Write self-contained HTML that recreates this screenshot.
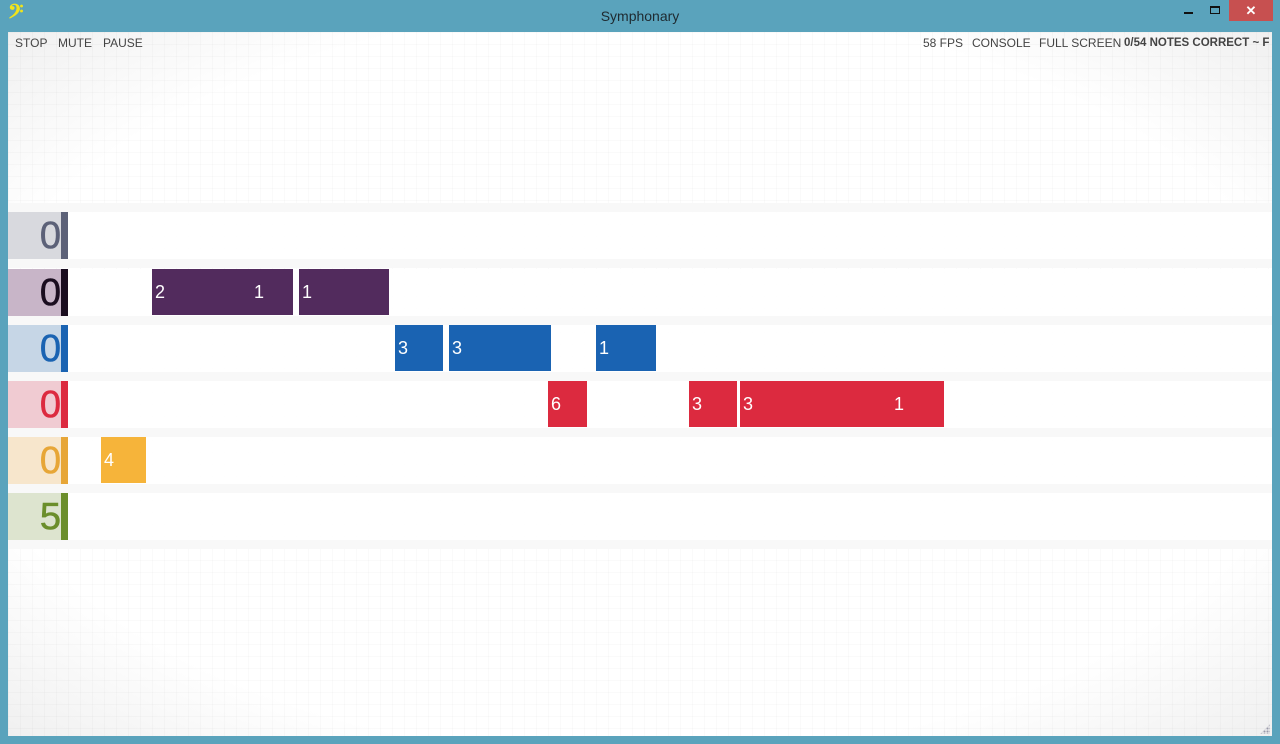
<!DOCTYPE html>
<html><head><meta charset="utf-8"><style>
*{margin:0;padding:0;box-sizing:border-box}
body{width:1280px;height:744px;background:#5aa3bc;position:relative;overflow:hidden;font-family:"Liberation Sans",sans-serif}
.title{position:absolute;top:0;left:0;width:1280px;height:32px;text-align:center;line-height:32px;font-size:14px;color:#1e2a30}
.close{position:absolute;left:1229px;top:0;width:44px;height:21px;background:#c75050;color:#fff;text-align:center;font-size:13px;line-height:21px;font-weight:bold}
.min{position:absolute;left:1184px;top:12px;width:9px;height:2px;background:#111}
.max{position:absolute;left:1210px;top:6px;width:10px;height:8px;border:1px solid #111;border-top-width:2px}
.content{position:absolute;left:8px;top:32px;width:1264px;height:704px;background:#fff;
background-image:linear-gradient(rgba(0,0,0,0.018) 1px,transparent 1px),linear-gradient(90deg,rgba(0,0,0,0.018) 1px,transparent 1px),radial-gradient(ellipse at center,#fff 75%,#f0f0f0 100%);
background-size:12px 12px,12px 12px,100% 100%;overflow:hidden}
.menu{position:absolute;top:4px;height:14px;line-height:14px;font-size:12px;color:#444;white-space:nowrap}
.gap{position:absolute;left:0;width:1264px;height:9px;background:#f8f8f8}
.row{position:absolute;left:0;width:1264px;height:47px;background:rgba(255,255,255,.9)}
.score{position:absolute;left:0;top:0;width:53px;height:47px;text-align:right;font-size:38px;line-height:48px;-webkit-text-stroke:0.6px currentColor}
.bar{position:absolute;left:53px;top:0;width:7px;height:47px}
.n{position:absolute;top:0;height:46px;color:#fff;font-size:18px;line-height:47px;padding-left:3px}
.n span{position:absolute;top:0}
</style></head><body>
<div style="position:absolute;left:8px;top:4px;color:#f2e41a;font-size:24px;font-weight:bold;line-height:22px">𝄢</div>
<div class="title">Symphonary</div>
<div class="min"></div><div class="max"></div><div class="close">✕</div>
<div class="content">
<div class="menu" style="left:7px">STOP</div>
<div class="menu" style="left:50px">MUTE</div>
<div class="menu" style="left:95px">PAUSE</div>
<div class="menu" style="left:915px">58 FPS</div>
<div class="menu" style="left:964px">CONSOLE</div>
<div class="menu" style="left:1031px">FULL SCREEN</div>
<div class="menu" style="left:1116px;font-weight:bold;font-size:11.5px">0/54 NOTES CORRECT ~ F</div>

<div class="gap" style="top:171px"></div>
<div class="row" style="top:180px"><div class="score" style="background:#d8d9de;color:#5c6178">0</div><div class="bar" style="background:#5c6178"></div></div>
<div class="gap" style="top:227px"></div>
<div class="row" style="top:237px"><div class="score" style="background:#c8b5c8;color:#1a0d1f">0</div><div class="bar" style="background:#1a0d1f"></div>
<div class="n" style="left:144px;width:141px;background:#522b5d">2<span style="left:102px">1</span></div>
<div class="n" style="left:291px;width:90px;background:#522b5d">1</div></div>
<div class="gap" style="top:284px"></div>
<div class="row" style="top:293px"><div class="score" style="background:#c6d6e6;color:#1a63b2">0</div><div class="bar" style="background:#1a63b2"></div>
<div class="n" style="left:387px;width:48px;background:#1a63b2">3</div>
<div class="n" style="left:441px;width:102px;background:#1a63b2">3</div>
<div class="n" style="left:588px;width:60px;background:#1a63b2">1</div></div>
<div class="gap" style="top:340px"></div>
<div class="row" style="top:349px"><div class="score" style="background:#f0cbd2;color:#dc2a3f">0</div><div class="bar" style="background:#dc2a3f"></div>
<div class="n" style="left:540px;width:39px;background:#dc2a3f">6</div>
<div class="n" style="left:681px;width:48px;background:#dc2a3f">3</div>
<div class="n" style="left:732px;width:204px;background:#dc2a3f">3<span style="left:154px">1</span></div></div>
<div class="gap" style="top:396px"></div>
<div class="row" style="top:405px"><div class="score" style="background:#f7e6cc;color:#e7a637">0</div><div class="bar" style="background:#e7a637"></div>
<div class="n" style="left:93px;width:45px;background:#f6b43a">4</div></div>
<div class="gap" style="top:452px"></div>
<div class="row" style="top:461px"><div class="score" style="background:#dde4cf;color:#6b8e2b">5</div><div class="bar" style="background:#6b8e2b"></div></div>
<div class="gap" style="top:508px"></div>
<div style="position:absolute;right:2px;bottom:2px;width:10px;height:10px;background:radial-gradient(circle,#99a 1px,transparent 1.2px);background-size:3px 3px;clip-path:polygon(100% 0,100% 100%,0 100%)"></div>
</div>
</body></html>
